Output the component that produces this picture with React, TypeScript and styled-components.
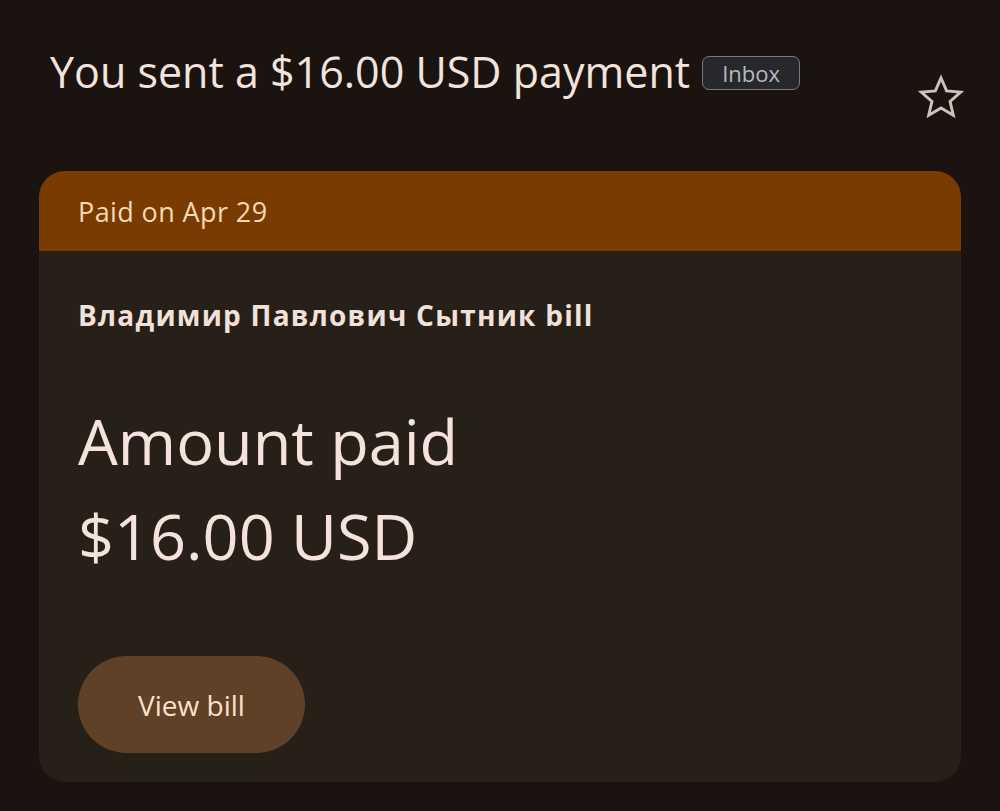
import React from "react";
import styled, { createGlobalStyle } from "styled-components";

const Global = createGlobalStyle`
  html, body { margin: 0; padding: 0; background: #1a1310; }
  body { font-family: "Open Sans", "Noto Sans", sans-serif; }
`;

const Page = styled.div`
  width: 1000px;
  height: 811px;
  background: #1a1310;
  box-sizing: border-box;
  padding: 46px 39px 0 39px;
  display: flex;
  flex-direction: column;
`;

const HeaderRow = styled.div`
  display: flex;
  align-items: flex-start;
  justify-content: space-between;
  padding-left: 11px;
  height: 125px;
`;

const TitleWrap = styled.div`
  display: flex;
  align-items: center;
  gap: 12px;
`;

const Title = styled.h1`
  margin: 0;
  font-family: "Open Sans", sans-serif;
  font-weight: 400;
  font-size: 43px;
  line-height: 52px;
  color: #f3e3dc;
  letter-spacing: 0px;
`;

const Badge = styled.span`
  display: inline-flex;
  align-items: center;
  justify-content: center;
  height: 34px;
  width: 98px;
  box-sizing: border-box;
  border: 1.5px solid #7a7a7e;
  border-radius: 7px;
  background: #26282c;
  color: #b9b9be;
  font-family: "Open Sans", sans-serif;
  font-size: 22px;
  margin-top: 2px;
`;

const StarButton = styled.div`
  margin-top: 27px;
  margin-right: -5px;
  width: 50px;
  height: 50px;
  display: flex;
  align-items: center;
  justify-content: center;
`;

const Card = styled.div`
  width: 922px;
  height: 611px;
  border-radius: 26px;
  overflow: hidden;
  background: #262019;
  display: flex;
  flex-direction: column;
`;

const CardHead = styled.div`
  height: 80px;
  background: #793b00;
  display: flex;
  align-items: center;
  padding-left: 39px;
  color: #f6d8b6;
  font-family: "Open Sans", sans-serif;
  font-size: 27px;
  letter-spacing: 0.4px;
`;

const CardBody = styled.div`
  padding: 40px 39px 0 39px;
  display: flex;
  flex-direction: column;
`;

const Payee = styled.div`
  font-family: "Open Sans", "Noto Sans", sans-serif;
  font-weight: 700;
  font-size: 28px;
  line-height: 48px;
  color: #f1e1da;
  letter-spacing: 1.25px;
`;

const Big = styled.div<{ $top: number }>`
  margin-top: ${(p) => p.$top}px;
  font-family: "Open Sans", sans-serif;
  font-weight: 400;
  font-size: 63px;
  line-height: 80px;
  color: #f3e3dc;
  letter-spacing: 0px;
`;

const Button = styled.button`
  margin-top: 80px;
  width: 227px;
  height: 97px;
  border: none;
  border-radius: 49px;
  background: #5f4127;
  color: #fbe0c9;
  font-family: "Open Sans", sans-serif;
  font-size: 28px;
  font-weight: 500;
  cursor: pointer;
`;

export default function App() {
  return (
    <>
      <Global />
      <Page>
        <HeaderRow>
          <TitleWrap>
            <Title>You sent a $16.00 USD payment</Title>
            <Badge>Inbox</Badge>
          </TitleWrap>
          <StarButton>
            <svg width="50" height="50" viewBox="0 0 24 24" fill="none">
              <path
                d="M12 2.4l2.7 6.2 6.75.6-5.1 4.45 1.55 6.6L12 16.8l-5.9 3.45 1.55-6.6-5.1-4.45 6.75-.6z"
                stroke="#cfc2bc"
                strokeWidth="1.4"
                strokeLinejoin="miter"
              />
            </svg>
          </StarButton>
        </HeaderRow>
        <Card>
          <CardHead>Paid on Apr 29</CardHead>
          <CardBody>
            <Payee>Владимир Павлович Сытник bill</Payee>
            <Big $top={62}>Amount paid</Big>
            <Big $top={15}>$16.00 USD</Big>
            <Button>View bill</Button>
          </CardBody>
        </Card>
      </Page>
    </>
  );
}
